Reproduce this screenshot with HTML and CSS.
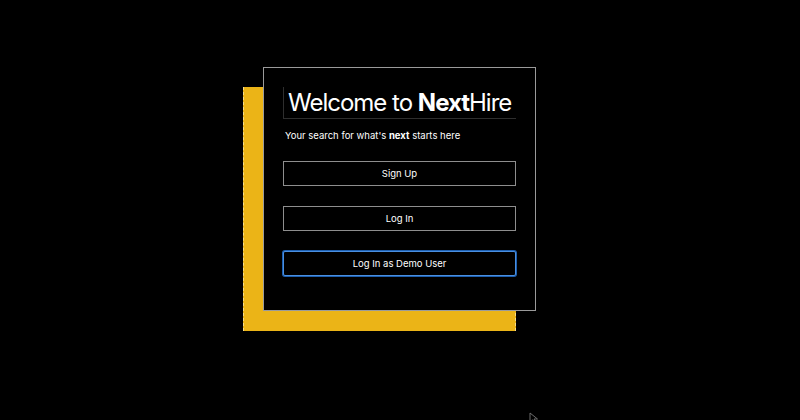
FILE: index.html
```
<!DOCTYPE html>
<html>
<head>
<meta charset="utf-8">
<link rel="stylesheet" href="styles.css">
</head>
<body>
<main class="stage">
  <div class="frame">
    <div class="accent"></div>
    <section class="card">
      <h1 class="title">Welcome to <b>Next</b>Hire</h1>
      <p class="tagline">Your search for what's <b>next</b> starts here</p>
      <div class="actions">
        <button class="btn">Sign Up</button>
        <button class="btn">Log In</button>
        <button class="btn focus">Log In as Demo User</button>
      </div>
    </section>
  </div>
</main>
<svg class="cursor" width="10" height="12" viewBox="0 0 10 12"><path d="M1 1 L1 10 L3.5 7.8 L5.5 11 L6.8 10.2 L5 7 L8.5 7 Z" fill="#000" stroke="#777" stroke-width="0.9"/></svg>
</body>
</html>
```
FILE: styles.css
```
html, body {
  margin: 0;
  padding: 0;
  background: #000;
  height: 100%;
}
body {
  font-family: Inter, "Liberation Sans", sans-serif;
  color: #fff;
  position: relative;
  overflow: hidden;
}
.stage {
  padding-top: 67px;
  padding-left: 263px;
}
.frame {
  position: relative;
  width: 273px;
  height: 244px;
}
.accent {
  position: absolute;
  left: -20px;
  top: 20px;
  width: 273px;
  height: 244px;
  box-sizing: border-box;
  background: #ebb417;
  border-left: 1px dashed #f6dc8c;
  border-right: 1px dashed #f6dc8c;
}
.card {
  position: relative;
  box-sizing: border-box;
  width: 273px;
  height: 244px;
  background: #000;
  border: 1px solid #9a9a9a;
  padding: 19px 19px 0 19px;
}
.title {
  margin: 0;
  height: 32px;
  box-sizing: border-box;
  border-left: 1px solid #2e2e2e;
  border-bottom: 1px solid #2e2e2e;
  font-size: 24px;
  font-weight: 400;
  letter-spacing: -1px;
  line-height: 32px;
  padding-left: 4px;
  white-space: nowrap;
}
.title b { font-weight: 700; }
.tagline {
  margin: 10px 0 0 2px;
  font-size: 9.5px;
  line-height: 14px;
}
.tagline b { font-weight: 700; }
.actions {
  margin-top: 18px;
  display: flex;
  flex-direction: column;
  gap: 20px;
}
.btn {
  height: 25px;
  box-sizing: border-box;
  background: #000;
  color: #fff;
  border: 1px solid #8e8e8e;
  font-family: inherit;
  font-size: 9.5px;
  padding: 0;
}
.btn.focus {
  border: 1px solid #4a8fe0;
  border-radius: 2px;
  box-shadow: 0 0 0 1px #1d5fb0;
}
.cursor {
  position: absolute;
  left: 529px;
  top: 412px;
}
```
